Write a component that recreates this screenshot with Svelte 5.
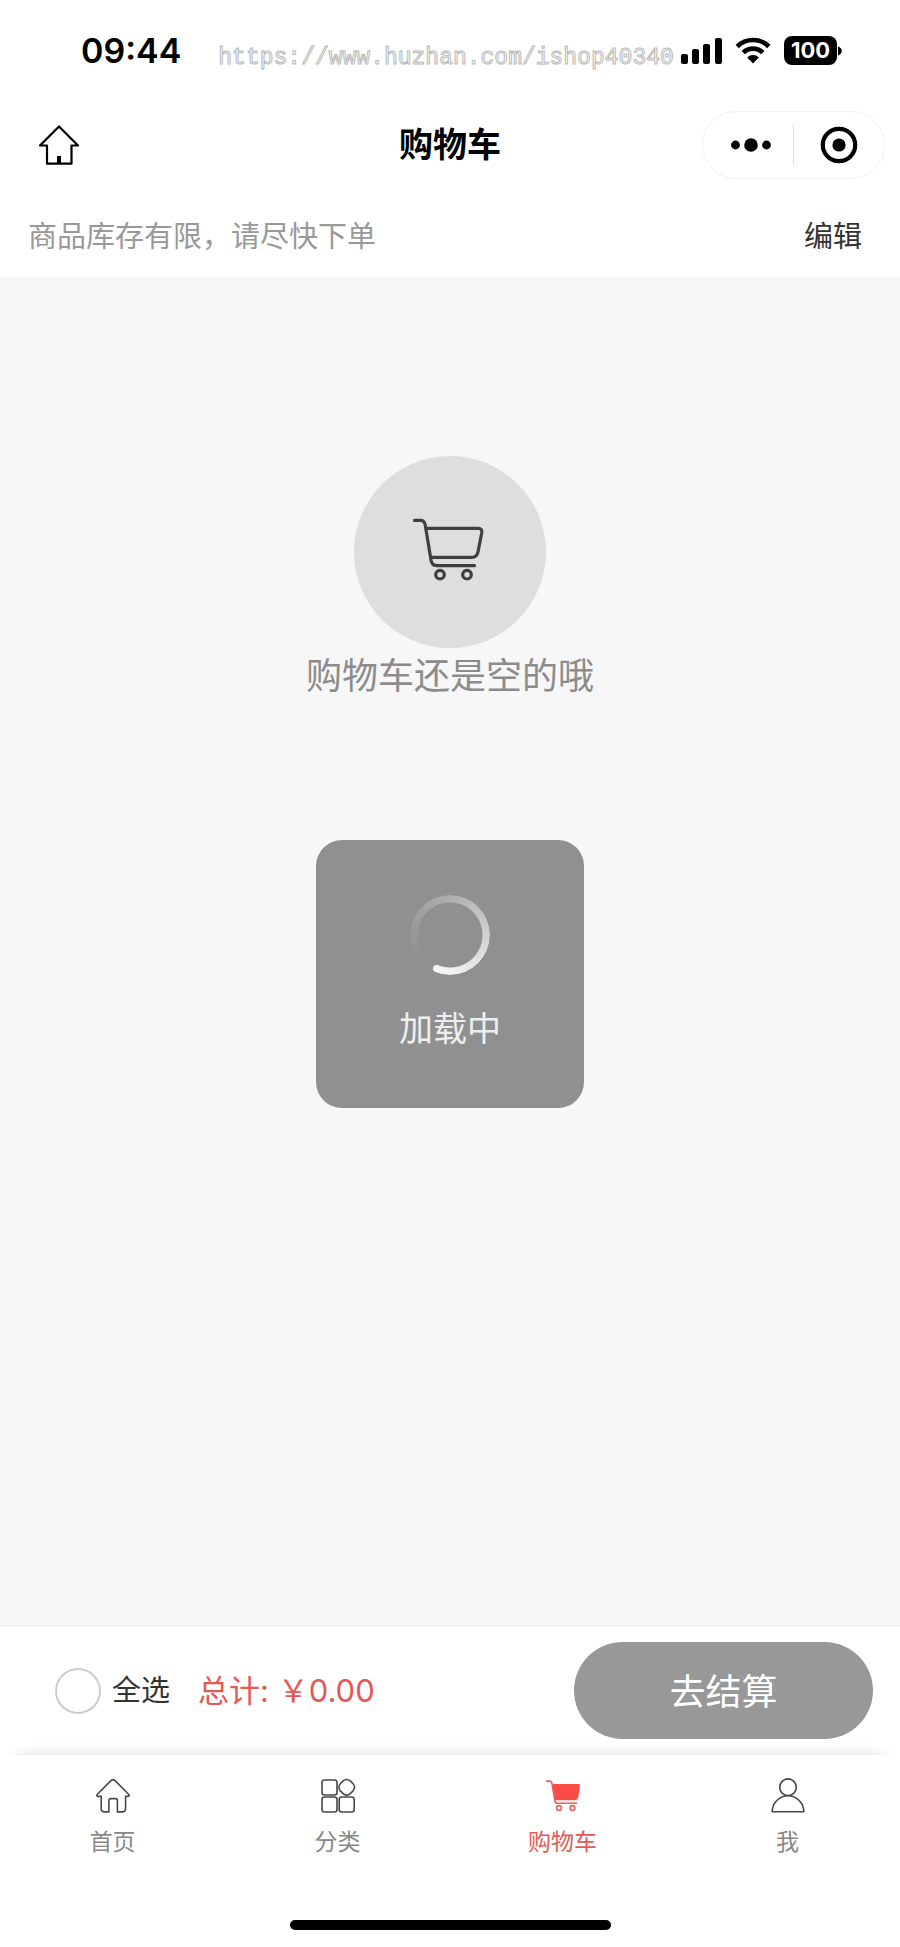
<script>
	// Cart state
	let allSelected = false;
	let total = 0;
	let loading = true;

	// Bottom navigation entries
	const tabs = [
		{ id: 'home', label: '首页' },
		{ id: 'category', label: '分类' },
		{ id: 'cart', label: '购物车' },
		{ id: 'me', label: '我' }
	];
	let activeTab = 'cart';
</script>

<svelte:head>
	<title>购物车</title>
</svelte:head>

<div class="page">
	<!-- Status Bar -->
	<div class="status-bar">
		<span class="time">09:44</span>
		<span class="site-url">https://www.huzhan.com/ishop40340</span>
		<div class="status-icons">
			<svg class="signal" width="42" height="28" viewBox="0 0 42 28" aria-hidden="true">
				<rect x="0" y="17" width="7" height="10" rx="2" />
				<rect x="11" y="12" width="7" height="15" rx="2" />
				<rect x="22" y="7" width="7" height="20" rx="2" />
				<rect x="34" y="1" width="7" height="26" rx="2" />
			</svg>
			<svg class="wifi" width="36" height="28" viewBox="0 0 36 28" aria-hidden="true">
				<path d="M2.2 9.5A22.5 22.5 0 0 1 33.8 9.5" fill="none" stroke="#000" stroke-width="4.6" />
				<path d="M8.2 15.6A14 14 0 0 1 27.8 15.6" fill="none" stroke="#000" stroke-width="4.6" />
				<path d="M12.2 20.4A8.2 8.2 0 0 1 23.8 20.4L18 26.4Z" />
			</svg>
			<div class="battery">100</div>
			<svg class="battery-cap" width="4" height="10" viewBox="0 0 4 10" aria-hidden="true">
				<path d="M0 0.5C5 1.5 5 8.5 0 9.5Z" />
			</svg>
		</div>
	</div>

	<!-- Navigation Bar -->
	<header class="nav-bar">
		<a href="#home" class="nav-home" aria-label="首页">
			<svg width="42" height="42" viewBox="0 0 42 42">
				<path d="M21 2.5L40 21.5H33.5V39.7H9V21.5H2Z" fill="none" stroke="#000" stroke-width="2.2" stroke-linejoin="round" />
				<rect x="19" y="32" width="4" height="8" />
			</svg>
		</a>
		<h1>购物车</h1>
		<div class="capsule">
			<button type="button" class="more" aria-label="更多">
				<svg width="42" height="16" viewBox="0 0 42 16">
					<circle cx="5.5" cy="8" r="4.4" />
					<circle cx="21" cy="8" r="6.8" />
					<circle cx="36.5" cy="8" r="4.4" />
				</svg>
			</button>
			<button type="button" aria-label="关闭">
				<svg width="38" height="38" viewBox="0 0 38 38">
					<circle cx="19" cy="19" r="16.2" fill="none" stroke="#000" stroke-width="4.2" />
					<circle cx="19" cy="19" r="6.6" />
				</svg>
			</button>
		</div>
	</header>

	<!-- Stock Notice -->
	<div class="notice">
		<p>商品库存有限，请尽快下单</p>
		<button type="button" class="edit">编辑</button>
	</div>

	<!-- Empty Cart -->
	<main class="empty">
		<div class="empty-icon">
			<svg width="76" height="70" viewBox="2 2 76 70" aria-hidden="true">
				<g fill="none" stroke="#3f3f3f" stroke-width="3.2" stroke-linecap="round" stroke-linejoin="round">
					<path d="M4.5 5.4H10.5C13.5 5.4 14.7 7 15.2 10L21 45C21.6 49 23.5 50.7 27 50.7H64.5" />
					<path d="M16.2 13.4H68.5C71 13.4 72.2 15 71.8 17.5L68 37C67.2 40.8 65.5 42.4 62 42.4H21.5" />
					<circle cx="30" cy="59.7" r="4.3" />
					<circle cx="57" cy="59.7" r="4.3" />
				</g>
			</svg>
		</div>
		<p>购物车还是空的哦</p>
	</main>

	<!-- Checkout Bar -->
	<div class="checkout">
		<label class="select-all">
			<input type="checkbox" bind:checked={allSelected} />
			全选
		</label>
		<p class="total">总计: ￥{total.toFixed(2)}</p>
		<button type="button" class="btn-checkout">去结算</button>
	</div>

	<!-- Tab Bar -->
	<footer class="tab-bar">
		<nav>
			{#each tabs as tab}
				<a href="#{tab.id}" class:active={tab.id === activeTab}>
					<svg width="36" height="36" viewBox="0 0 36 36" aria-hidden="true">
						{#if tab.id === 'home'}
							<path class="line" d="M16.2 2.4Q18 0.9 19.8 2.4L33.6 16.2Q35 18.2 33 18.4H30.6V30.5Q30.6 33.9 27 33.9H22.4V22.5Q22.4 20.6 20.5 20.6H15.8Q13.9 20.6 13.9 22.5V33.9H10Q6.2 33.9 6.2 30.5V18.4H3Q1 18.2 2.4 16.2Z" />
						{:else if tab.id === 'category'}
							<rect class="line" x="2" y="2" width="15" height="15" rx="2.5" />
							<rect class="line" x="19.7" y="2.3" width="14" height="14" rx="5" transform="rotate(45 26.7 9.3)" />
							<rect class="line" x="2" y="19" width="15" height="15" rx="2.5" />
							<rect class="line" x="19.2" y="19" width="15" height="15" rx="2.5" />
						{:else if tab.id === 'cart'}
							<path d="M7.3 6H33.5Q35 6 34.9 7.6L33.4 18.5Q32.9 22.3 30 22.3H10.2Z" fill="#fb4b45" />
							<path d="M1.7 3.1H4.6Q6.6 3.2 7 6L9.9 23Q10.3 25.3 12.5 25.3H31.5" fill="none" stroke="#e9605b" stroke-width="1.6" stroke-linecap="round" />
							<circle cx="14" cy="30" r="2.4" fill="none" stroke="#e9605b" stroke-width="1.6" />
							<circle cx="27.5" cy="30" r="2.4" fill="none" stroke="#e9605b" stroke-width="1.6" />
						{:else}
							<circle class="line" cx="18" cy="9.2" r="8.3" />
							<path class="line" d="M2.2 33.8A15.8 16 0 0 1 33.8 33.8Z" />
						{/if}
					</svg>
					<span>{tab.label}</span>
				</a>
			{/each}
		</nav>
		<div class="home-indicator"></div>
	</footer>

	{#if loading}
		<div class="toast" role="status">
			<div class="spinner"></div>
			<p>加载中</p>
		</div>
	{/if}
</div>

<style>
	:global(body) {
		background: #f7f7f7;
	}

	.page {
		min-height: 100vh;
		display: flex;
		flex-direction: column;
		font-family: Inter, "Noto Sans CJK SC", sans-serif;
		color: #333;
	}

	p,
	h1 {
		margin: 0;
		font-weight: 400;
	}

	button {
		padding: 0;
		border: none;
		background: none;
		font: inherit;
		color: inherit;
		cursor: pointer;
	}

	a {
		color: inherit;
		text-decoration: none;
	}

	svg {
		display: block;
	}

	/* Status Bar */
	.status-bar {
		display: flex;
		align-items: center;
		height: 101px;
		padding: 0 58px 0 81px;
		background: #fff;
		color: #000;
	}

	.time {
		font-size: 34px;
		font-weight: 600;
		line-height: 44px;
	}

	.site-url {
		margin-left: 37px;
		padding-top: 14px;
		font-family: "Liberation Mono", monospace;
		font-size: 23px;
		line-height: 26px;
		color: #fff;
		-webkit-text-stroke: 1px #b8b8b8;
	}

	.status-icons {
		display: flex;
		align-items: center;
		margin-left: auto;
	}

	.wifi {
		margin: 0 13px 0 12px;
	}

	.battery {
		width: 53px;
		border-radius: 8px;
		background: #000;
		color: #fff;
		font-size: 22px;
		font-weight: 700;
		line-height: 29px;
		text-align: center;
	}

	.battery-cap {
		margin-left: 1px;
	}

	/* Navigation Bar */
	.nav-bar {
		display: grid;
		grid-template-columns: 1fr auto 1fr;
		align-items: center;
		height: 88px;
		padding: 0 15px;
		background: #fff;
	}

	.nav-home {
		justify-self: start;
		margin-left: 23px;
	}

	.nav-bar h1 {
		font-size: 34px;
		font-weight: 700;
		line-height: 48px;
		color: #000;
	}

	.capsule {
		justify-self: end;
		display: flex;
		align-items: center;
		box-sizing: border-box;
		width: 183px;
		height: 68px;
		border: 1px solid #f0f0f0;
		border-radius: 34px;
	}

	.capsule button {
		flex: 1;
		display: flex;
		align-items: center;
		justify-content: center;
		height: 40px;
	}

	.capsule button + button {
		border-left: 1px solid #ddd;
	}

	.more svg {
		margin-left: 6px;
	}

	/* Stock Notice */
	.notice {
		display: flex;
		align-items: center;
		justify-content: space-between;
		box-sizing: border-box;
		height: 88px;
		padding: 8px 38px 0 28px;
		background: #fff;
		font-size: 29px;
		line-height: 42px;
	}

	.notice p {
		color: #999;
	}

	/* Empty Cart */
	.empty {
		flex: 1;
		display: flex;
		flex-direction: column;
		align-items: center;
		padding-top: 179px;
		background: #f7f7f7;
	}

	.empty-icon {
		display: flex;
		align-items: center;
		justify-content: center;
		width: 192px;
		height: 192px;
		border-radius: 50%;
		background: #dedede;
	}

	.empty p {
		font-size: 36px;
		line-height: 56px;
		color: #8c8c8c;
	}

	/* Checkout Bar */
	.checkout {
		display: flex;
		align-items: center;
		box-sizing: border-box;
		height: 130px;
		padding: 0 27px 0 55px;
		border-top: 1px solid #ececec;
		background: #fff;
	}

	.select-all {
		display: flex;
		align-items: center;
		gap: 11px;
		font-size: 29px;
		line-height: 42px;
	}

	.select-all input {
		appearance: none;
		width: 46px;
		height: 46px;
		margin: 0;
		border: 2px solid #ccc;
		border-radius: 50%;
	}

	.select-all input:checked {
		border-color: #fb4b45;
		background: #fb4b45;
	}

	.total {
		margin-left: 28px;
		font-size: 31px;
		line-height: 42px;
		color: #e25a55;
	}

	.btn-checkout {
		width: 299px;
		height: 97px;
		margin-left: auto;
		padding-bottom: 4px;
		border-radius: 49px;
		background: #989898;
		color: #fff;
		font-size: 36px;
	}

	/* Tab Bar */
	.tab-bar {
		padding: 23px 0 17px;
		background: #fff;
		box-shadow: 0 -16px 14px -18px rgba(0, 0, 0, 0.2);
	}

	.tab-bar nav {
		display: grid;
		grid-template-columns: repeat(4, 1fr);
	}

	.tab-bar a {
		display: flex;
		flex-direction: column;
		align-items: center;
		gap: 14px;
		font-size: 23px;
		line-height: 28px;
		color: #888;
	}

	.tab-bar .active {
		color: #e25a55;
	}

	.line {
		fill: none;
		stroke: #484848;
		stroke-width: 1.6;
		stroke-linejoin: round;
	}

	.home-indicator {
		width: 321px;
		height: 10px;
		margin: 64px auto 0;
		border-radius: 5px;
		background: #000;
	}

	/* Loading Toast */
	.toast {
		position: fixed;
		top: 50%;
		left: 50%;
		transform: translate(-50%, -50%);
		display: flex;
		flex-direction: column;
		align-items: center;
		box-sizing: border-box;
		width: 268px;
		height: 268px;
		padding-top: 55px;
		border-radius: 26px;
		background: #909090;
	}

	.toast p {
		margin-top: 30px;
		font-size: 34px;
		line-height: 48px;
		color: #eee;
	}

	.spinner {
		position: relative;
		width: 80px;
		height: 80px;
	}

	.spinner::before {
		content: '';
		position: absolute;
		inset: 0;
		border-radius: 50%;
		background: conic-gradient(from 203deg, rgba(255, 255, 255, 0) 30deg, rgba(255, 255, 255, 0.25) 150deg, rgba(255, 255, 255, 0.9) 340deg);
		mask: radial-gradient(circle, transparent 32px, #000 33px);
	}

	.spinner::after {
		content: '';
		position: absolute;
		top: 70px;
		left: 23px;
		width: 7px;
		height: 7px;
		border-radius: 50%;
		background: #f4f4f4;
	}
</style>
